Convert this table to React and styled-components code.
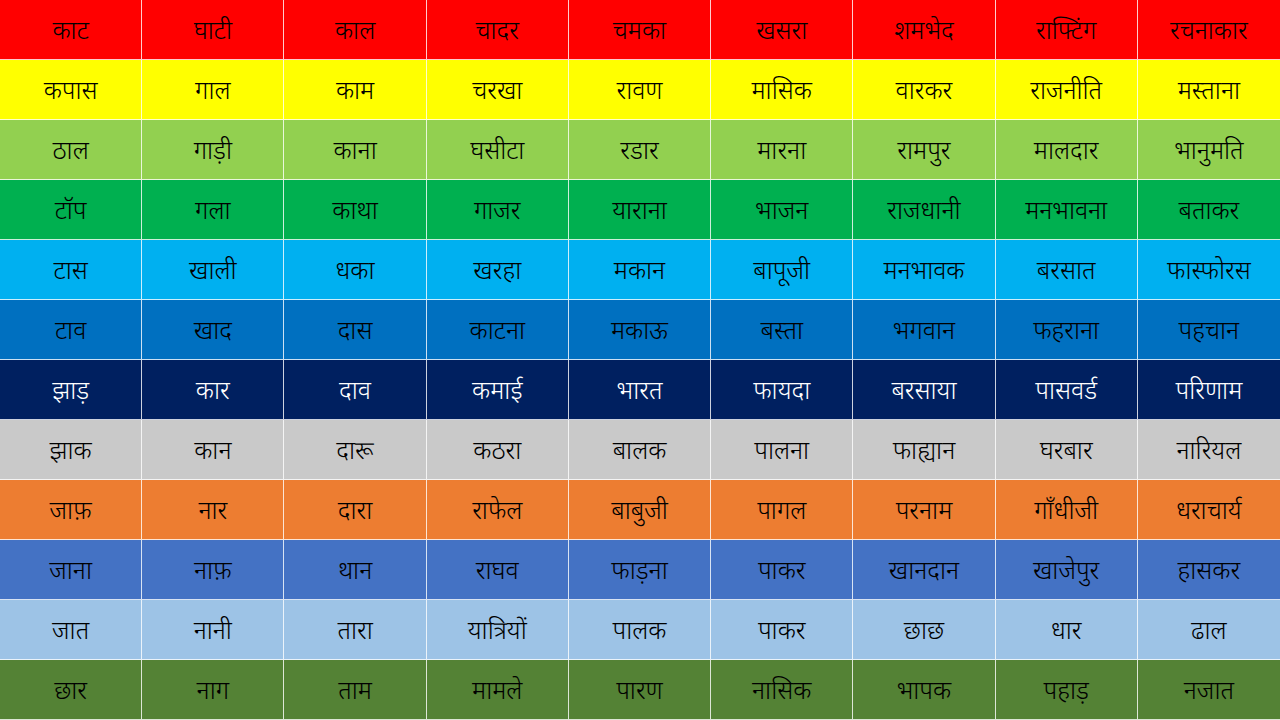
import React from "react";
import styled, { createGlobalStyle } from "styled-components";

const Global = createGlobalStyle`
  html, body { margin: 0; padding: 0; background: #ffffff; overflow: hidden; }
  #root { width: 1280px; height: 720px; }
`;

const rows = [
  { bg: "#FF0000", fg: "#000", words: ["काट", "घाटी", "काल", "चादर", "चमका", "खसरा", "शमभेद", "राफ्टिंग", "रचनाकार"] },
  { bg: "#FFFF00", fg: "#000", words: ["कपास", "गाल", "काम", "चरखा", "रावण", "मासिक", "वारकर", "राजनीति", "मस्ताना"] },
  { bg: "#92D050", fg: "#000", words: ["ठाल", "गाड़ी", "काना", "घसीटा", "रडार", "मारना", "रामपुर", "मालदार", "भानुमति"] },
  { bg: "#00B050", fg: "#000", words: ["टॉप", "गला", "काथा", "गाजर", "याराना", "भाजन", "राजधानी", "मनभावना", "बताकर"] },
  { bg: "#00B0F0", fg: "#000", words: ["टास", "खाली", "धका", "खरहा", "मकान", "बापूजी", "मनभावक", "बरसात", "फास्फोरस"] },
  { bg: "#0070C0", fg: "#000", words: ["टाव", "खाद", "दास", "काटना", "मकाऊ", "बस्ता", "भगवान", "फहराना", "पहचान"] },
  { bg: "#002060", fg: "#fff", words: ["झाड़", "कार", "दाव", "कमाई", "भारत", "फायदा", "बरसाया", "पासवर्ड", "परिणाम"] },
  { bg: "#C9C9C9", fg: "#000", words: ["झाक", "कान", "दारू", "कठरा", "बालक", "पालना", "फाह्यान", "घरबार", "नारियल"] },
  { bg: "#ED7D31", fg: "#000", words: ["जाफ़", "नार", "दारा", "राफेल", "बाबुजी", "पागल", "परनाम", "गाँधीजी", "धराचार्य"] },
  { bg: "#4472C4", fg: "#000", words: ["जाना", "नाफ़", "थान", "राघव", "फाड़ना", "पाकर", "खानदान", "खाजेपुर", "हासकर"] },
  { bg: "#9DC3E6", fg: "#000", words: ["जात", "नानी", "तारा", "यात्रियों", "पालक", "पाकर", "छाछ", "धार", "ढाल"] },
  { bg: "#548235", fg: "#000", words: ["छार", "नाग", "ताम", "मामले", "पारण", "नासिक", "भापक", "पहाड़", "नजात"] },
];

const Table = styled.div`
  width: 1280px;
  height: 720px;
  display: grid;
  grid-template-columns: repeat(9, 1fr);
  grid-template-rows: repeat(12, 60px);
  font-family: "Noto Sans Devanagari", "Lohit Devanagari", "Mangal", "Noto Sans", "DejaVu Sans", sans-serif;
`;

const Cell = styled.div`
  display: flex;
  align-items: center;
  justify-content: center;
  padding-top: 7px;
  background: ${(p) => p.$bg};
  color: ${(p) => p.$fg};
  font-size: 25px;
  font-weight: 300;
  line-height: 1;
  box-sizing: border-box;
  border-right: 1px solid rgba(255, 255, 255, 0.8);
  border-bottom: 1px solid rgba(255, 255, 255, 0.8);
  &:nth-child(9n) { border-right: none; }
`;

export default function App() {
  return (
    <>
      <Global />
      <Table>
        {rows.map((r, i) =>
          r.words.map((w, j) => (
            <Cell key={`${i}-${j}`} $bg={r.bg} $fg={r.fg}>
              {w}
            </Cell>
          ))
        )}
      </Table>
    </>
  );
}
